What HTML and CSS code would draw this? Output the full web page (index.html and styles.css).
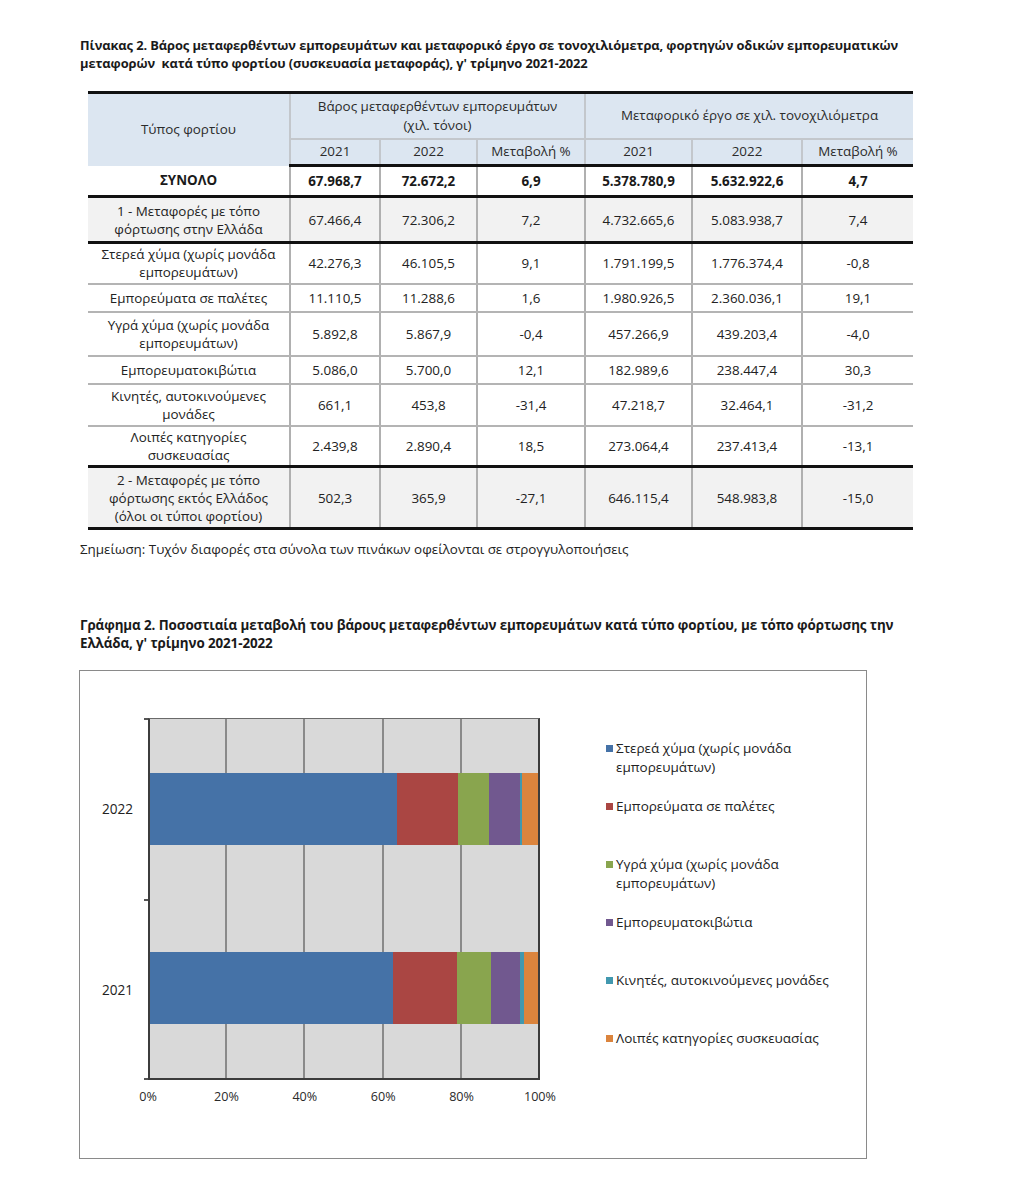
FILE: index.html
```html
<!DOCTYPE html>
<html lang="el">
<head>
<meta charset="utf-8">
<title>Πίνακας 2</title>
<link rel="stylesheet" href="styles.css">
</head>
<body>
<div class="page">
  <h2 class="caption">Πίνακας 2. Βάρος μεταφερθέντων εμπορευμάτων και μεταφορικό έργο σε τονοχιλιόμετρα, φορτηγών οδικών εμπορευματικών<br>μεταφορών&nbsp; κατά τύπο φορτίου (συσκευασία μεταφοράς), γ' τρίμηνο 2021-2022</h2>

  <table class="data">
    <colgroup>
      <col class="c-type"><col class="c-a"><col class="c-b"><col class="c-c"><col class="c-d"><col class="c-e"><col class="c-f">
    </colgroup>
    <thead>
      <tr class="h-top">
        <th rowspan="2" class="first">Τύπος φορτίου</th>
        <th colspan="3">Βάρος μεταφερθέντων εμπορευμάτων<br>(χιλ. τόνοι)</th>
        <th colspan="3">Μεταφορικό έργο σε χιλ. τονοχιλιόμετρα</th>
      </tr>
      <tr class="h-sub">
        <th>2021</th><th>2022</th><th>Μεταβολή %</th>
        <th>2021</th><th>2022</th><th>Μεταβολή %</th>
      </tr>
    </thead>
    <tbody>
      <tr class="total r-31">
        <td>ΣΥΝΟΛΟ</td><td>67.968,7</td><td>72.672,2</td><td>6,9</td><td>5.378.780,9</td><td>5.632.922,6</td><td>4,7</td>
      </tr>
      <tr class="group r-46">
        <td>1 - Μεταφορές με τόπο<br>φόρτωσης στην Ελλάδα</td><td>67.466,4</td><td>72.306,2</td><td>7,2</td><td>4.732.665,6</td><td>5.083.938,7</td><td>7,4</td>
      </tr>
      <tr class="r-41">
        <td>Στερεά χύμα (χωρίς μονάδα<br>εμπορευμάτων)</td><td>42.276,3</td><td>46.105,5</td><td>9,1</td><td>1.791.199,5</td><td>1.776.374,4</td><td>-0,8</td>
      </tr>
      <tr class="r-28">
        <td>Εμπορεύματα σε παλέτες</td><td>11.110,5</td><td>11.288,6</td><td>1,6</td><td>1.980.926,5</td><td>2.360.036,1</td><td>19,1</td>
      </tr>
      <tr class="r-44">
        <td>Υγρά χύμα (χωρίς μονάδα<br>εμπορευμάτων)</td><td>5.892,8</td><td>5.867,9</td><td>-0,4</td><td>457.266,9</td><td>439.203,4</td><td>-4,0</td>
      </tr>
      <tr class="r-28">
        <td>Εμπορευματοκιβώτια</td><td>5.086,0</td><td>5.700,0</td><td>12,1</td><td>182.989,6</td><td>238.447,4</td><td>30,3</td>
      </tr>
      <tr class="r-42">
        <td>Κινητές, αυτοκινούμενες<br>μονάδες</td><td>661,1</td><td>453,8</td><td>-31,4</td><td>47.218,7</td><td>32.464,1</td><td>-31,2</td>
      </tr>
      <tr class="r-41 before-group">
        <td>Λοιπές κατηγορίες<br>συσκευασίας</td><td>2.439,8</td><td>2.890,4</td><td>18,5</td><td>273.064,4</td><td>237.413,4</td><td>-13,1</td>
      </tr>
      <tr class="group last r-62">
        <td>2 - Μεταφορές με τόπο<br>φόρτωσης εκτός Ελλάδος<br>(όλοι οι τύποι φορτίου)</td><td>502,3</td><td>365,9</td><td>-27,1</td><td>646.115,4</td><td>548.983,8</td><td>-15,0</td>
      </tr>
    </tbody>
  </table>

  <p class="note">Σημείωση: Τυχόν διαφορές στα σύνολα των πινάκων οφείλονται σε στρογγυλοποιήσεις</p>

  <h2 class="caption chart-caption">Γράφημα 2. Ποσοστιαία μεταβολή του βάρους μεταφερθέντων εμπορευμάτων κατά τύπο φορτίου, με τόπο φόρτωσης την<br>Ελλάδα, γ' τρίμηνο 2021-2022</h2>

  <div class="chart">
    <div class="plot-grid">
      <div class="ylabels">
        <div class="ylabel">2022</div>
        <div class="ylabel">2021</div>
      </div>
      <div class="plot">
        <div class="band">
          <div class="bar">
            <span class="seg s1" style="width:63.77%"></span>
            <span class="seg s2" style="width:15.61%"></span>
            <span class="seg s3" style="width:8.12%"></span>
            <span class="seg s4" style="width:7.88%"></span>
            <span class="seg s5" style="width:0.63%"></span>
            <span class="seg s6" style="width:3.99%"></span>
          </div>
        </div>
        <div class="band">
          <div class="bar">
            <span class="seg s1" style="width:62.66%"></span>
            <span class="seg s2" style="width:16.47%"></span>
            <span class="seg s3" style="width:8.73%"></span>
            <span class="seg s4" style="width:7.54%"></span>
            <span class="seg s5" style="width:0.98%"></span>
            <span class="seg s6" style="width:3.62%"></span>
          </div>
        </div>
        <span class="ytick t-top"></span>
        <span class="ytick t-mid"></span>
        <span class="ytick t-bot"></span>
      </div>
      <div></div>
      <div class="xlabels">
        <span class="xl"><span>0%</span></span>
        <span class="xl"><span>20%</span></span>
        <span class="xl"><span>40%</span></span>
        <span class="xl"><span>60%</span></span>
        <span class="xl"><span>80%</span></span>
        <span class="xl"><span>100%</span></span>
      </div>
    </div>

    <ul class="legend">
      <li><i class="sw s1"></i><span>Στερεά χύμα (χωρίς μονάδα<br>εμπορευμάτων)</span></li>
      <li><i class="sw s2"></i><span>Εμπορεύματα σε παλέτες</span></li>
      <li><i class="sw s3"></i><span>Υγρά χύμα (χωρίς μονάδα<br>εμπορευμάτων)</span></li>
      <li><i class="sw s4"></i><span>Εμπορευματοκιβώτια</span></li>
      <li><i class="sw s5"></i><span>Κινητές, αυτοκινούμενες μονάδες</span></li>
      <li><i class="sw s6"></i><span>Λοιπές κατηγορίες συσκευασίας</span></li>
    </ul>
  </div>
</div>
</body>
</html>
```

FILE: styles.css
```css
* { box-sizing: border-box; }

html, body {
  margin: 0;
  padding: 0;
  background: #ffffff;
}

body {
  font-family: "Open Sans", "Noto Sans", "DejaVu Sans", sans-serif;
  color: #1e1e1e;
  font-size: 12px;
}

.page {
  padding: 36px 0 0 80px;
  width: 1017px;
}

.caption {
  margin: 0;
  font-size: 12.9px;
  font-weight: 700;
  line-height: 18px;
  color: #1a1a1a;
  letter-spacing: -0.1px;
}

/* ---------- table ---------- */
.data {
  margin: 19px 0 0 8px;
  width: 825px;
  border-collapse: collapse;
  table-layout: fixed;
  font-size: 13.4px;
  line-height: 18px;
  color: #222;
}

.c-type { width: 202px; }
.c-a { width: 90px; }
.c-b { width: 97px; }
.c-c { width: 108px; }
.c-d { width: 107px; }
.c-e { width: 110px; }
.c-f { width: 111px; }

.data th,
.data td {
  text-align: center;
  vertical-align: middle;
  padding: 0 2px;
  white-space: nowrap;
}

.data thead th {
  background: #dce6f1;
  font-weight: 400;
  color: #2b2b2b;
  border-left: 2px solid #c3c7cc;
  border-top: 2px solid #c3c7cc;
  line-height: 19px;
}

.data thead th.first { border-left: none; }
.data thead tr.h-top th { border-top: 3px solid #111; height: 46px; }
.data thead tr.h-sub th { height: 27px; border-bottom: 3px solid #111; }
.data thead tr.h-sub th:first-child { border-left: 2px solid #c3c7cc; }

.data td {
  border-left: 2px solid #b0b0b0;
  border-bottom: 2px solid #b4b4b4;
}

.data td:first-child { border-left: none; }

.data tr.total td {
  font-weight: 700;
  border-bottom: 3px solid #111;
  color: #1a1a1a;
}

.data tr.group td {
  background: #f2f2f2;
  border-bottom: 3px solid #111;
}

.data tr.before-group td { border-bottom: 3px solid #111; }

.r-31 { height: 31px; }
.r-46 { height: 46px; }
.r-41 { height: 41px; }
.r-28 { height: 28px; }
.r-44 { height: 44px; }
.r-42 { height: 42px; }
.r-62 { height: 62px; }

.note {
  margin: 10px 0 0 0;
  font-size: 13.4px;
  line-height: 18px;
  color: #222;
}

.chart-caption {
  margin-top: 58px;
  font-size: 13.4px;
}

/* ---------- chart ---------- */
.chart {
  margin: 18px 0 0 -1px;
  width: 788px;
  height: 489px;
  border: 1px solid #8a8a8a;
  display: flex;
  align-items: flex-start;
  padding-top: 47px;
}

.plot-grid {
  display: grid;
  grid-template-columns: 68px 392px;
  grid-template-rows: 362px auto;
}

.ylabels {
  display: flex;
  flex-direction: column;
}

.ylabel {
  flex: 1;
  display: flex;
  align-items: center;
  justify-content: flex-end;
  padding-right: 15px;
  font-size: 13.6px;
  color: #222;
}

.plot {
  position: relative;
  display: flex;
  flex-direction: column;
  border-left: 2px solid #3c3c3c;
  border-right: 2px solid #3c3c3c;
  border-bottom: 2px solid #3c3c3c;
  border-top: 1px solid #6a6a6a;
  background-color: #d9d9d9;
  background-image: repeating-linear-gradient(to right,
      transparent 0, transparent 76.6px,
      #8a8a8a 76.6px, #8a8a8a 78.6px);
  background-size: 392px 100%;
  background-position: -2px 0;
}

.band {
  flex: 1;
  display: flex;
  align-items: center;
}

.bar {
  width: 100%;
  height: 72px;
  display: flex;
  position: relative;
  z-index: 1;
}

.seg { display: block; height: 100%; }

.s1 { background: #4572a7; }
.s2 { background: #aa4643; }
.s3 { background: #89a54e; }
.s4 { background: #71588f; }
.s5 { background: #4198af; }
.s6 { background: #db843d; }

.ytick {
  position: absolute;
  left: -6px;
  width: 4px;
  height: 2px;
  background: #555;
}
.t-top { top: -1px; }
.t-mid { top: 180px; }
.t-bot { bottom: -2px; }

.xlabels {
  grid-column: 2;
  display: flex;
  justify-content: space-between;
  padding-top: 8px;
  font-size: 12.6px;
  line-height: 17px;
  color: #2a2a2a;
}

.xl {
  width: 0;
  display: flex;
  justify-content: center;
}

.xl span { white-space: nowrap; }

.legend {
  list-style: none;
  margin: 21px 0 0 66px;
  padding: 0;
  font-size: 13.5px;
  line-height: 19px;
  color: #222;
}

.legend li {
  height: 58px;
  display: flex;
  align-items: flex-start;
  white-space: nowrap;
}

.sw {
  flex: none;
  width: 7px;
  height: 7px;
  margin: 6px 3px 0 0;
}
```
